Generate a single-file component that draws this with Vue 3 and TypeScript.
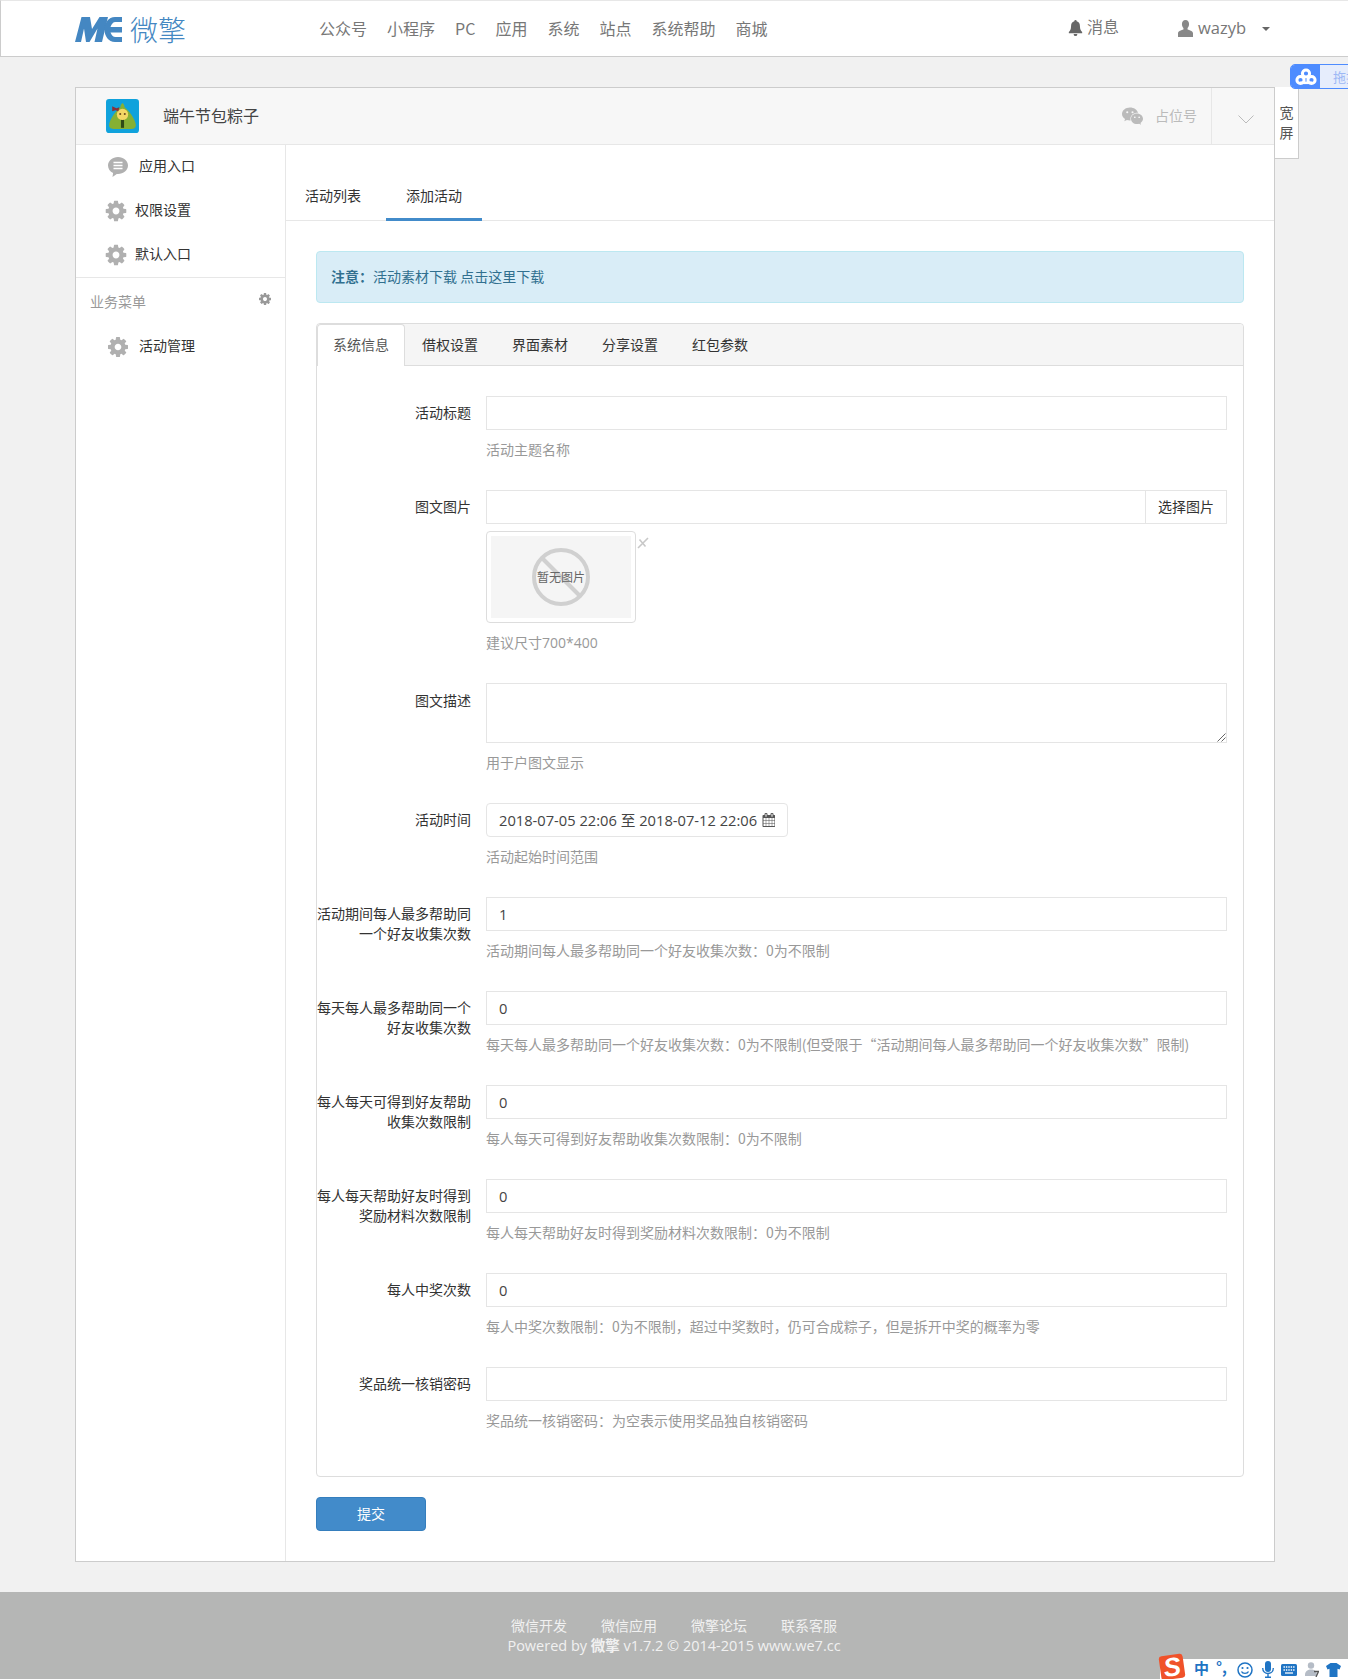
<script setup lang="ts">
const navItems: string[] = ['公众号', '小程序', 'PC', '应用', '系统', '站点', '系统帮助', '商城']
const formTabs: string[] = ['系统信息', '借权设置', '界面素材', '分享设置', '红包参数']
const footerLinks: string[] = ['微信开发', '微信应用', '微擎论坛', '联系客服']
interface Row { label: string; value: string; help: string }
const rows: Row[] = [
  { label: '活动期间每人最多帮助同一个好友收集次数', value: '1', help: '活动期间每人最多帮助同一个好友收集次数：0为不限制' },
  { label: '每天每人最多帮助同一个好友收集次数', value: '0', help: '每天每人最多帮助同一个好友收集次数：0为不限制(但受限于“活动期间每人最多帮助同一个好友收集次数”限制)' },
  { label: '每人每天可得到好友帮助收集次数限制', value: '0', help: '每人每天可得到好友帮助收集次数限制：0为不限制' },
  { label: '每人每天帮助好友时得到奖励材料次数限制', value: '0', help: '每人每天帮助好友时得到奖励材料次数限制：0为不限制' },
  { label: '每人中奖次数', value: '0', help: '每人中奖次数限制：0为不限制，超过中奖数时，仍可合成粽子，但是拆开中奖的概率为零' },
  { label: '奖品统一核销密码', value: '', help: '奖品统一核销密码：为空表示使用奖品独自核销密码' },
]
const gearPath = 'M1152 896q0-106-75-181t-181-75-181 75-75 181 75 181 181 75 181-75 75-181zm512-109v222q0 12-8 23t-20 13l-185 28q-19 54-39 91 35 50 107 138 10 12 10 25t-9 23q-27 37-99 108t-94 71q-12 0-26-9l-138-108q-44 23-91 38-16 136-29 186-7 28-36 28h-222q-14 0-24.5-8.5t-11.5-21.5l-28-184q-49-16-90-37l-141 107q-10 9-25 9-14 0-25-11-126-114-165-168-7-10-7-23 0-12 8-23 15-21 51-66.5t54-70.5q-27-50-41-99l-183-27q-13-2-21-12.5t-8-23.5v-222q0-12 8-23t19-13l186-28q14-46 39-92-40-57-107-138-10-12-10-24 0-10 9-23 26-36 98.5-107.5t94.5-71.5q13 0 26 10l138 107q44-23 91-38 16-136 29-186 7-28 36-28h222q14 0 24.5 8.5t11.5 21.5l28 184q49 16 90 37l142-107q9-9 24-9 13 0 25 10 129 119 165 170 7 8 7 22 0 12-8 23-15 21-51 66.5t-54 70.5q26 50 41 98l183 28q13 2 21 12.5t8 23.5z'
const calPath = 'M192 1664h288v-288h-288v288zm352 0h320v-288h-320v288zm-352-352h288v-320h-288v320zm352 0h320v-320h-320v320zm-352-384h288v-288h-288v288zm736 736h320v-288h-320v288zm-384-736h320v-288h-320v288zm768 736h288v-288h-288v288zm-384-352h320v-320h-320v320zm-352-864v-288q0-13-9.5-22.5t-22.5-9.5h-64q-13 0-22.5 9.5t-9.5 22.5v288q0 13 9.5 22.5t22.5 9.5h64q13 0 22.5-9.5t9.5-22.5zm736 864h288v-320h-288v320zm-384-384h320v-288h-320v288zm384 0h288v-288h-288v288zm32-480v-288q0-13-9.5-22.5t-22.5-9.5h-64q-13 0-22.5 9.5t-9.5 22.5v288q0 13 9.5 22.5t22.5 9.5h64q13 0 22.5-9.5t9.5-22.5zm384-64v1280q0 52-38 90t-90 38h-1408q-52 0-90-38t-38-90v-1280q0-52 38-90t90-38h128v-96q0-66 47-113t113-47h64q66 0 113 47t47 113v96h384v-96q0-66 47-113t113-47h64q66 0 113 47t47 113v96h128q52 0 90 38t38 90z'
</script>

<template>
  <div class="page">
    <header class="top">
      <div class="logo">
        <svg class="logo-mark" viewBox="0 0 47 25" width="47" height="25" role="img" aria-label="微擎标志">
          <path d="M0 25L6.5 0H15L17 12 24.5 0H33L27 25H19.5L22.5 11.5 14.5 25H11L9 11.5 6 25z" fill="#4487c2"/>
          <path d="M47 0H40C33.5 0 29.5 6 29.5 12.5S33.5 25 40 25H47V20H40.5C38 20 36.5 18 35.5 15.5H47V10H35.5C36.5 7 38 5 40.5 5H47z" fill="#4487c2"/>
        </svg>
        <span class="logo-text">微擎</span>
      </div>
      <nav class="nav">
        <a v-for="n in navItems" :key="n" class="nav-item">{{ n }}</a>
      </nav>
      <div class="top-right">
        <span class="msg">
          <svg class="bell" viewBox="0 0 16 18"><path d="M8 0a1.3 1.3 0 0 1 1.3 1.4C12 2 13 4 13 7c0 3.5 1 5 2.5 6.500V15H.5v-1.500C2 12 3 10.500 3 7c0-3 1-5 3.700-5.600A1.300 1.300 0 0 1 8 0zM6 15.800h4A2 2 0 0 1 8 18a2 2 0 0 1-2-2.200z" fill="#666"/></svg>
          <span class="msg-t">消息</span>
        </span>
        <span class="user">
          <svg class="user-ic" viewBox="0 0 16 18"><path d="M8 0c2.5 0 3.800 1.800 3.800 4.300 0 1.700-.6 3.200-1.600 4.200v1.600c2 .8 5.800 1.500 5.800 4V18H0v-3.900c0-2.500 3.800-3.200 5.800-4V8.500C4.800 7.500 4.200 6 4.200 4.300 4.200 1.800 5.500 0 8 0z" fill="#888"/></svg>
          <span class="uname">wazyb</span>
          <i class="caret"></i>
        </span>
      </div>
    </header>

    <div class="baidu">
      <span class="baidu-ic">
        <svg viewBox="0 0 22 18" width="22" height="18"><g fill="none" stroke="#fff" stroke-width="3"><circle cx="11" cy="5.5" r="3.6"/><circle cx="5.5" cy="12" r="3.6"/><circle cx="16.5" cy="12" r="3.6"/></g><rect x="5" y="13.5" width="12" height="2.6" fill="#fff"/></svg>
      </span>
      <span class="baidu-txt">拖拽上传</span>
    </div>

    <main class="wrap">
      <div class="panel">
        <div class="wide">
          <span>宽</span><span>屏</span>
        </div>
        <div class="panel-head">
          <svg class="app-ic" viewBox="0 0 32 33">
            <rect width="32" height="33" rx="3" fill="#10a2dc"/>
            <path d="M16 4c1 1 2 2 2 4 4 3 10 11 11 17 0 3-2 4-4 4H7c-2 0-4-1-4-4 1-6 7-14 11-17 0-2 1-3 2-4z" fill="#86b034"/>
            <rect x="14.5" y="19" width="3" height="9" fill="#2f4a16"/>
            <circle cx="16" cy="15" r="5.5" fill="#f3d765"/>
            <circle cx="13.8" cy="14.5" r="1" fill="#6b4a1c"/><circle cx="18.2" cy="14.5" r="1" fill="#6b4a1c"/>
            <path d="M6 7l4 2 3-1-1 4-3-1-3 1z" fill="#8a2f3a"/>
          </svg>
          <span class="app-name">端午节包粽子</span>
          <span class="spacer"></span>
          <svg class="wx" viewBox="0 0 22 18">
            <path d="M8.3 0C3.7 0 0 3 0 6.8c0 2.2 1.2 4 3.2 5.300L2.4 14.5l2.8-1.400c1 .3 2 .5 3.100.5h.7a6 6 0 0 1-.2-1.600C8.800 8.300 12 5.500 16.300 5.500h.5C16 2.300 12.500 0 8.300 0z" fill="#bbb"/>
            <path d="M22 11.900c0-3.100-3-5.600-6.300-5.600-3.600 0-6.300 2.500-6.300 5.600s2.700 5.600 6.300 5.600c.8 0 1.500-.1 2.200-.4l2.100 1.100-.6-1.900c1.600-1.100 2.600-2.700 2.600-4.400z" fill="#bbb"/>
            <circle cx="5.5" cy="5" r="1.1" fill="#f7f7f7"/><circle cx="11" cy="5" r="1.1" fill="#f7f7f7"/>
            <circle cx="13.4" cy="10.3" r=".9" fill="#f7f7f7"/><circle cx="18" cy="10.3" r=".9" fill="#f7f7f7"/>
          </svg>
          <span class="acct">占位号</span>
          <span class="chev">
            <svg viewBox="0 0 16 9" width="16" height="9"><path d="M.5.5L8 8 15.5.5" fill="none" stroke="#bbb" stroke-width="1"/></svg>
          </span>
        </div>

        <div class="panel-body">
          <aside class="side">
            <div class="side-list">
              <a class="side-item in1">
                <svg class="s-ic" viewBox="0 0 20 20"><path d="M10 0c5.5 0 10 3.700 10 8.500S15.500 17 10 17H8.800L4.500 20l.6-4C2 14.500 0 11.800 0 8.500 0 3.700 4.500 0 10 0z" fill="#b0b0b0"/><path d="M5.5 5.5h9M5.5 8.5h9M5.5 11.5h9" stroke="#fff" stroke-width="1.4"/></svg>
                应用入口
              </a>
              <a class="side-item">
                <svg class="g-ic" viewBox="0 0 1792 1792"><path :d="gearPath" fill="#b0b0b0"/></svg>
                权限设置
              </a>
              <a class="side-item">
                <svg class="g-ic" viewBox="0 0 1792 1792"><path :d="gearPath" fill="#b0b0b0"/></svg>
                默认入口
              </a>
            </div>
            <div class="side-title">
              <span>业务菜单</span>
              <svg class="t-ic" viewBox="0 0 1792 1792"><path :d="gearPath" fill="#999"/></svg>
            </div>
            <a class="side-item in1 biz">
              <svg class="s-ic" viewBox="128 128 1536 1536"><path :d="gearPath" fill="#b0b0b0"/></svg>
              活动管理
            </a>
          </aside>

          <section class="content">
            <div class="tabs">
              <a class="tab">活动列表</a>
              <a class="tab active">添加活动</a>
            </div>
            <div class="inner">
              <div class="alert"><b>注意：</b>活动素材下载 点击这里下载</div>

              <div class="fpanel">
                <div class="ftabs">
                  <a v-for="(t, i) in formTabs" :key="t" class="ftab" :class="{ on: i === 0 }">{{ t }}</a>
                </div>
                <div class="fbody">
                  <div class="group">
                    <label class="lbl">活动标题</label>
                    <div class="ctl">
                      <div class="input"></div>
                      <p class="help">活动主题名称</p>
                    </div>
                  </div>

                  <div class="group">
                    <label class="lbl">图文图片</label>
                    <div class="ctl">
                      <div class="igroup">
                        <div class="input flat"></div>
                        <span class="addon">选择图片</span>
                      </div>
                      <div class="thumb-row">
                        <div class="thumb">
                          <div class="noimg">
                            <svg viewBox="0 0 58 58" width="58" height="58"><circle cx="29" cy="29" r="27" fill="none" stroke="#d0d0d0" stroke-width="4"/><path d="M10 10l38 38" stroke="#d0d0d0" stroke-width="4"/></svg>
                            <span class="noimg-t">暂无图片</span>
                          </div>
                        </div>
                        <svg class="x" viewBox="0 0 12 12" width="12" height="12"><path d="M1 11L11 1M2.5 2.500l6 7" stroke="#c8c8c8" stroke-width="1.6" fill="none"/></svg>
                      </div>
                      <p class="help num">建议尺寸700*400</p>
                    </div>
                  </div>

                  <div class="group">
                    <label class="lbl desc">图文描述</label>
                    <div class="ctl">
                      <div class="input area">
                        <svg class="grip" viewBox="0 0 10 10" width="10" height="10"><path d="M9.5 1.500l-8 8M9.500 5.500l-4 4" stroke="#666" stroke-width="1"/></svg>
                      </div>
                      <p class="help">用于户图文显示</p>
                    </div>
                  </div>

                  <div class="group">
                    <label class="lbl">活动时间</label>
                    <div class="ctl">
                      <div class="input date">
                        <span>2018-07-05 22:06 至 2018-07-12 22:06</span>
                        <svg class="cal" viewBox="0 0 1664 1792" width="13" height="14"><path :d="calPath" fill="#555"/></svg>
                      </div>
                      <p class="help">活动起始时间范围</p>
                    </div>
                  </div>

                  <div v-for="r in rows" :key="r.label" class="group">
                    <label class="lbl">{{ r.label }}</label>
                    <div class="ctl">
                      <div class="input">{{ r.value }}</div>
                      <p class="help">{{ r.help }}</p>
                    </div>
                  </div>
                </div>
              </div>

              <button class="submit" type="button">提交</button>
            </div>
          </section>
        </div>
      </div>
    </main>

    <footer class="foot">
      <div class="flinks"><a v-for="f in footerLinks" :key="f">{{ f }}</a></div>
      <div class="fcopy">Powered by <b>微擎</b> v1.7.2 © 2014-2015 www.we7.cc</div>
    </footer>

    <div class="ime">
      <span class="ime-s">S</span>
      <span class="ime-zh">中</span>
      <span class="ime-p">°,</span>
      <svg class="ime-i" viewBox="0 0 16 16" width="16" height="16"><circle cx="8" cy="8" r="7" fill="none" stroke="#1f74c4" stroke-width="1.5"/><circle cx="5.5" cy="6" r="1.1" fill="#1f74c4"/><circle cx="10.5" cy="6" r="1.1" fill="#1f74c4"/><path d="M4.5 9.5c1 2.500 6 2.500 7 0" fill="none" stroke="#1f74c4" stroke-width="1.3"/></svg>
      <svg class="ime-i" viewBox="0 0 12 17" width="12" height="17"><rect x="3" y="0" width="6" height="11" rx="3" fill="#1f74c4"/><path d="M.7 7c0 3.500 2.500 5.500 5.300 5.500S11.300 10.500 11.300 7M6 12.500V16M3 16.300h6" fill="none" stroke="#1f74c4" stroke-width="1.4"/></svg>
      <svg class="ime-i" viewBox="0 0 16 12" width="16" height="12"><rect width="16" height="12" rx="1.5" fill="#1f74c4"/><path d="M2.5 3h11M2.5 6h11" stroke="#fff" stroke-width="1.3" stroke-dasharray="1.4 1"/><path d="M4 9h8" stroke="#fff" stroke-width="1.3"/></svg>
      <svg class="ime-i" viewBox="0 0 14 15" width="14" height="15"><circle cx="6" cy="3.5" r="3.2" fill="#b5bcc6"/><path d="M0 13c0-4 3-5.500 6-5.500S12 9 12 13v1H0z" fill="#b5bcc6"/><path d="M9 9.5h4.500L11 15" fill="none" stroke="#555" stroke-width="1.3"/></svg>
      <svg class="ime-i" viewBox="0 0 15 14" width="15" height="14"><path d="M4.5 0h6L15 3l-1.500 3.500-2-.8V14h-8V5.700l-2 .8L0 3z" fill="#1f74c4"/></svg>
    </div>
  </div>
</template>

<style>
html, body { margin: 0; background: #f1f1f1; }
</style>

<style scoped>
.page {
  position: relative;
  width: 1348px;
  height: 1679px;
  overflow: hidden;
  background: #f1f1f1;
  font-family: "Noto Sans CJK SC", "Noto Sans", sans-serif;
  font-size: 14px;
  color: #333;
}
p { margin: 0; }
.top {
  height: 55px;
  background: #fff;
  border: 1px solid #ccc;
  border-width: 1px 0 1px 1px;
  border-top-color: #e7e7e7;
  display: flex;
  align-items: center;
  padding-left: 74px;
}
.logo { display: flex; align-items: center; width: 244px; height: 30px; color: #4487c2; }
.logo-mark { flex: none; margin-right: 8px; margin-top: 2px; }
.logo-text { font-size: 28px; font-weight: 300; line-height: 30px; }
.nav { display: flex; gap: 20px; font-size: 16px; color: #777; margin-top: -1px; }
.nav-item { line-height: 24px; }
.top-right { position: absolute; left: 1068px; top: 14px; height: 28px; display: flex; align-items: center; color: #777; font-size: 16px; }
.msg { display: flex; align-items: center; gap: 4px; width: 110px; font-size: 16px; line-height: 26px; margin-top: -1px; }
.msg-t { margin-top: -3px; }
.bell { width: 15px; height: 16px; }
.user { display: flex; align-items: center; }
.user-ic { width: 15px; height: 17px; margin-right: 5px; }
.uname { font-family: "Open Sans", sans-serif; font-size: 16.5px; margin-top: -2px; }
.caret { margin: 2px 0 0 16px; border: 4px solid transparent; border-top-color: #666; border-bottom: 0; }

.baidu { position: absolute; left: 1290px; top: 64px; width: 60px; height: 25px; box-sizing: border-box; display: flex; border: 1px solid #4e8cff; border-radius: 5px 0 0 5px; overflow: hidden; z-index: 3; background: #e6edfc; }
.baidu-ic { width: 29px; flex: none; background: #4e8cff; display: flex; align-items: center; justify-content: center; }
.baidu-txt { color: #9db8f5; margin-left: 13px; font-size: 13px; white-space: nowrap; line-height: 23px; }

.wrap { padding: 30px 73px 30px 75px; }
.panel { position: relative; border: 1px solid #ccc; background: #fff; height: 1473px; box-sizing: content-box; }
.wide { position: absolute; left: 100%; top: -1px; margin-left: 1px; width: 24px; height: 72px; box-sizing: border-box; background: #fff; border: 1px solid #ccc; border-top: 0; border-left: 0; display: flex; flex-direction: column; align-items: center; padding-top: 15px; line-height: 20px; color: #555; }
.panel-head { height: 56px; background: #f7f7f7; border-bottom: 1px solid #e7e7e7; display: flex; align-items: center; padding-left: 30px; }
.app-ic { width: 33px; height: 34px; }
.app-name { font-size: 16px; margin: -2px 0 0 24px; color: #444; }
.spacer { flex: 1; }
.wx { width: 21px; height: 18px; margin-right: 12px; }
.acct { color: #bbb; width: 56px; margin-top: -2px; }
.chev { width: 63px; height: 56px; border-left: 1px solid #e7e7e7; display: flex; align-items: center; justify-content: center; padding: 6px 0 0 5px; box-sizing: border-box; }

.panel-body { display: flex; height: 1416px; }
.side { width: 209px; border-right: 1px solid #e7e7e7; flex: none; }
.side-list { border-bottom: 1px solid #e7e7e7; height: 133px; box-sizing: border-box; }
.side-item { display: flex; align-items: center; height: 44px; box-sizing: border-box; padding: 0 0 4px 29px; color: #333; }
.side-item.in1 { padding-left: 32px; }
.side-item.biz { margin-top: 2px; }
.s-ic { width: 20px; height: 20px; margin: 4px 11px 0 0; flex: none; }
.g-ic { width: 24px; height: 24px; margin: 4px 7px 0 -1px; flex: none; }
.side-title { position: relative; height: 45px; padding: 11px 0 0 14px; box-sizing: border-box; color: #999; line-height: 24px; }
.t-ic { position: absolute; left: 182px; top: 14px; width: 14px; height: 14px; }

.content { flex: 1; min-width: 0; }
.tabs { height: 76px; box-sizing: border-box; border-bottom: 1px solid #e7e7e7; display: flex; align-items: flex-end; }
.tab { display: block; height: 40px; line-height: 28px; margin-bottom: -1px; box-sizing: border-box; }
.tab:first-child { padding-left: 19px; width: 100px; }
.tab.active { width: 96px; text-align: center; border-bottom: 3px solid #428bca; }
.inner { padding: 30px 30px 0; }
.alert { height: 52px; box-sizing: border-box; background: #d9edf7; border: 1px solid #bce8f1; border-radius: 4px; color: #31708f; line-height: 48px; padding-left: 14px; }
.alert b { font-weight: 700; }
.fpanel { margin-top: 20px; border: 1px solid #ddd; border-radius: 4px; }
.ftabs { height: 42px; box-sizing: border-box; background: #f5f5f5; border-bottom: 1px solid #ddd; display: flex; border-radius: 4px 4px 0 0; }
.ftab { padding: 0 17px; line-height: 40px; white-space: nowrap; }
.ftab.on { padding: 0; width: 88px; text-align: center; box-sizing: border-box; height: 42px; background: #fff; border: 1px solid #ddd; border-bottom: 0; color: #555; border-radius: 4px 4px 0 0; line-height: 38px; }
.fbody { padding: 30px 16px 15px 0; }
.group { display: flex; margin-bottom: 30px; }
.lbl { width: 154px; flex: none; box-sizing: border-box; text-align: right; line-height: 20px; padding-top: 6px; }
.lbl.desc { padding-top: 7px; }
.ctl { flex: 1; min-width: 0; margin-left: 15px; }
.input { height: 34px; box-sizing: border-box; border: 1px solid #e5e5e5; padding: 0 12px; line-height: 32px; color: #444; background: #fff; font-family: "Open Sans", "Noto Sans CJK SC", sans-serif; font-size: 14.7px; }
.input.flat { flex: 1; }
.igroup { display: flex; }
.addon { width: 81px; flex: none; box-sizing: border-box; height: 34px; border: 1px solid #e5e5e5; border-left: 0; text-align: center; line-height: 30px; }
.thumb-row { display: flex; margin-top: 7px; }
.thumb { width: 150px; height: 92px; box-sizing: border-box; border: 1px solid #ddd; border-radius: 4px; padding: 4px; }
.noimg { position: relative; height: 82px; background: #f5f5f5; display: flex; align-items: center; justify-content: center; }
.noimg-t { position: absolute; left: 0; right: 0; top: 32px; text-align: center; font-size: 12px; line-height: 18px; color: #666; }
.x { margin: 6px 0 0 1px; }
.area { height: 60px; position: relative; }
.grip { position: absolute; right: 0; bottom: 0; }
.date { width: 302px; border-radius: 4px; white-space: nowrap; padding-right: 0; display: flex; align-items: center; gap: 5px; }
.help { margin-top: 9px; padding-bottom: 1px; line-height: 20px; color: #999; }
.help.num { margin-top: 10px; padding-bottom: 0; font-family: "Open Sans", "Noto Sans CJK SC", sans-serif; }
.submit { display: block; margin-top: 20px; width: 110px; height: 34px; padding: 0 0 2px; background: #428bca; border: 1px solid #357ebd; border-radius: 4px; color: #fff; font: inherit; }

.foot { position: absolute; left: 0; right: 0; top: 1592px; height: 87px; background: #b5b6b5; color: #f1f1f1; text-align: center; padding-top: 23px; box-sizing: border-box; line-height: 20px; }
.flinks { display: flex; justify-content: center; gap: 34px; height: 21px; }
.fcopy { font-family: "Open Sans", "Noto Sans CJK SC", sans-serif; font-size: 14.5px; }

.ime { position: absolute; right: 0; bottom: 0; width: 188px; height: 20px; background: #fff; z-index: 4; display: flex; align-items: center; }
.ime-s { position: absolute; left: 0; top: -4px; width: 24px; height: 24px; background: #f0522a; border-radius: 3px; color: #fff; font: italic 900 26px/24px "Liberation Sans", sans-serif; text-align: center; transform: rotate(-8deg); }
.ime-zh { position: absolute; left: 34px; top: -2px; color: #1f74c4; font-size: 15px; line-height: 22px; font-weight: 700; }
.ime-p { position: absolute; left: 56px; top: -2px; color: #1f74c4; font-size: 15px; line-height: 20px; font-weight: 700; }
.ime-i { position: absolute; top: 3px; }
.ime-i:nth-of-type(1) { left: 77px; }
.ime-i:nth-of-type(2) { left: 102px; top: 2px; }
.ime-i:nth-of-type(3) { left: 121px; top: 5px; }
.ime-i:nth-of-type(4) { left: 145px; }
.ime-i:nth-of-type(5) { left: 166px; top: 4px; }
</style>
